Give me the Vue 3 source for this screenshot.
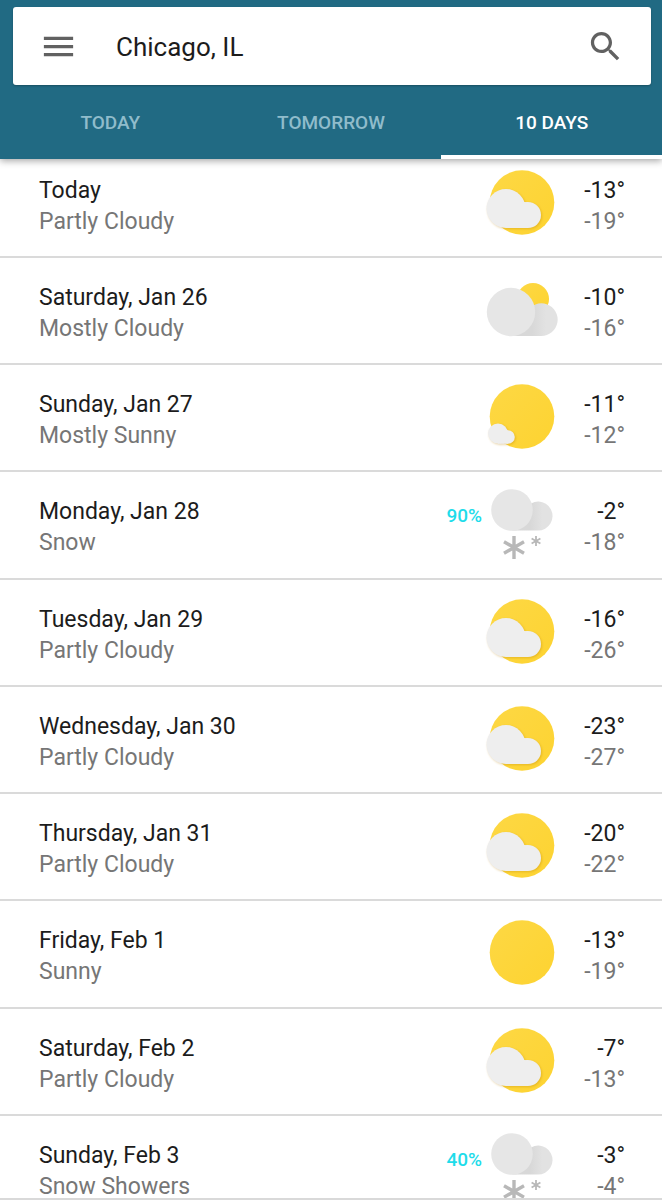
<script setup>
import { ref } from 'vue';

const city = ref('Chicago, IL');
const tabs = ['Today', 'Tomorrow', '10 Days'];
const activeTab = ref('10 Days');

const days = [
    { name: 'Today', text: 'Partly Cloudy', icon: 'partly', high: -13, low: -19 },
    { name: 'Saturday, Jan 26', text: 'Mostly Cloudy', icon: 'cloudy', high: -10, low: -16 },
    { name: 'Sunday, Jan 27', text: 'Mostly Sunny', icon: 'mostly-sunny', high: -11, low: -12 },
    { name: 'Monday, Jan 28', text: 'Snow', icon: 'snow', chance: 90, high: -2, low: -18 },
    { name: 'Tuesday, Jan 29', text: 'Partly Cloudy', icon: 'partly', high: -16, low: -26 },
    { name: 'Wednesday, Jan 30', text: 'Partly Cloudy', icon: 'partly', high: -23, low: -27 },
    { name: 'Thursday, Jan 31', text: 'Partly Cloudy', icon: 'partly', high: -20, low: -22 },
    { name: 'Friday, Feb 1', text: 'Sunny', icon: 'sunny', high: -13, low: -19 },
    { name: 'Saturday, Feb 2', text: 'Partly Cloudy', icon: 'partly', high: -7, low: -13 },
    { name: 'Sunday, Feb 3', text: 'Snow Showers', icon: 'snow', chance: 40, high: -3, low: -4 },
];
</script>

<template>
    <div class="app">
        <header class="header">
            <form class="search" @submit.prevent>
                <button type="button" class="icon-btn" aria-label="Menu">
                    <svg viewBox="0 0 24 24"><path d="M3 18h18v-2H3v2zm0-5h18v-2H3v2zm0-7v2h18V6H3z" /></svg>
                </button>
                <input v-model="city" class="search-input" type="text" aria-label="Location">
                <button type="submit" class="icon-btn" aria-label="Search">
                    <svg viewBox="0 0 24 24"><path d="M15.5 14h-.79l-.28-.27C15.41 12.59 16 11.11 16 9.5 16 5.91 13.09 3 9.5 3S3 5.91 3 9.5 5.91 16 9.5 16c1.61 0 3.09-.59 4.23-1.57l.27.28v.79l5 4.99L20.49 19l-4.99-5zm-6 0C7.01 14 5 11.99 5 9.5S7.01 5 9.5 5 14 7.01 14 9.5 11.99 14 9.5 14z" /></svg>
                </button>
            </form>
            <nav class="tabs">
                <button
                    v-for="tab in tabs"
                    :key="tab"
                    type="button"
                    class="tab"
                    :class="{ active: tab === activeTab }"
                    @click="activeTab = tab"
                >{{ tab }}</button>
            </nav>
        </header>

        <!-- gradients shared by the weather icons -->
        <svg class="defs" aria-hidden="true">
            <defs>
                <linearGradient id="sun" x1="0" y1="0" x2="1" y2="1">
                    <stop offset="0" stop-color="#fdd844" />
                    <stop offset="1" stop-color="#fdd331" />
                </linearGradient>
                <linearGradient id="back" x1="0" y1="0" x2="1" y2="0">
                    <stop offset="0.45" stop-color="#d8d8d8" />
                    <stop offset="0.75" stop-color="#e2e2e2" />
                </linearGradient>
            </defs>
        </svg>

        <ul class="days">
            <li v-for="day in days" :key="day.name" class="day">
                <div class="day-info">
                    <div class="day-name">{{ day.name }}</div>
                    <div class="day-text">{{ day.text }}</div>
                </div>
                <div v-if="day.chance" class="chance">{{ day.chance }}%</div>
                <svg class="weather" viewBox="0 0 80 80" aria-hidden="true">
                    <circle v-if="day.icon === 'cloudy'" cx="51" cy="29" r="16" fill="url(#sun)" />
                    <circle v-else-if="day.icon !== 'snow'" cx="40" cy="39.5" r="32.3" fill="url(#sun)" />

                    <g v-if="day.icon === 'partly'" class="cloud">
                        <circle cx="24" cy="45.5" r="19.5" />
                        <circle cx="46" cy="52" r="13" />
                        <path d="M24 46H46V65H24zM38 36Q41 40 46 39V50H38z" />
                    </g>
                    <g v-if="day.icon === 'mostly-sunny'" class="cloud">
                        <circle cx="16" cy="56.5" r="10" />
                        <circle cx="26" cy="60" r="6.8" />
                        <path d="M16 57H26V66.7H16zM22 52Q24 54 26 53.2V60H22z" />
                    </g>
                    <g v-if="day.icon === 'cloudy'">
                        <path d="M29 66H59A16.3 16.3 0 1 0 45 42z" fill="url(#back)" />
                        <circle cx="29" cy="42" r="24.2" fill="#e6e6e6" />
                    </g>
                    <g v-if="day.icon === 'snow'">
                        <path d="M30 46.6H56A14.5 14.5 0 1 0 44 24z" fill="url(#back)" />
                        <circle cx="30" cy="26" r="20.8" fill="#e6e6e6" />
                        <path class="flake" stroke-width="3.4" d="M32 52V75M22 57.8L42 69.2M42 57.8L22 69.2" />
                        <path class="flake" stroke-width="1.8" d="M54 52V62M49.6 54.5L58.4 59.5M58.4 54.5L49.6 59.5" />
                    </g>
                </svg>
                <div class="temps">
                    <div class="day-name">{{ day.high }}°</div>
                    <div class="day-text">{{ day.low }}°</div>
                </div>
            </li>
        </ul>
    </div>
</template>

<style>
body{
margin:0;
background:#fff;
}
</style>

<style scoped>
*{box-sizing:border-box}

.app{
display:flex;
flex-direction:column;
height:100vh;
border-bottom:2px solid #d9d9d9;
font-family:Roboto,sans-serif;
color:#1c1c1c;
}

.header{
position:relative;
z-index:1;
flex-shrink:0;
padding:7px 11px 0 13px;
background:#216a83;
box-shadow:0 2px 7px rgba(0,0,0,0.35);
}

.search{
display:flex;
align-items:center;
gap:38px;
height:78px;
padding:0 26px;
background:#fff;
border-radius:3px;
box-shadow:0 1px 2px rgba(0,0,0,0.25);
}

.icon-btn{
flex-shrink:0;
width:39px;
height:39px;
padding:0;
border:none;
background:none;
cursor:pointer;
}

.icon-btn svg{
display:block;
width:100%;
height:100%;
fill:#616161;
}

.search-input{
flex:1;
min-width:0;
padding:2px 0 0;
border:none;
outline:none;
background:none;
font:400 26px/32px Roboto,sans-serif;
color:#1c1c1c;
}

.tabs{
display:flex;
height:74px;
margin:0 -11px 0 -13px;
}

.tab{
flex:1;
padding:6px 0 0;
border:none;
border-bottom:4px solid transparent;
background:none;
font:500 19px/24px Roboto,sans-serif;
text-transform:uppercase;
color:#90bccb;
cursor:pointer;
}

.tab.active{
color:#fff;
border-bottom-color:#fff;
}

.defs{
position:absolute;
width:0;
height:0;
}

.days{
flex:1;
min-height:0;
display:grid;
grid-auto-rows:107px 107px 107px 108px;
margin:-8px 0 0;
padding:0;
list-style:none;
overflow-y:auto;
scrollbar-width:none;
}

.day{
display:flex;
align-items:flex-start;
padding:12px 37px 0 39px;
border-bottom:2px solid #dadada;
}

.day-info{
flex:1;
padding-top:12px;
}

.day-name,
.day-text{
font-size:23px;
line-height:31px;
}

.day-text{color:#767676}

.chance{
padding-top:17px;
font-size:19px;
font-weight:500;
line-height:30px;
color:#1fdcea;
}

.weather{
flex-shrink:0;
width:80px;
height:80px;
}

.cloud{
fill:#eee;
filter:drop-shadow(1px 1px 1px rgba(190,130,0,0.35));
}

.flake{
fill:none;
stroke:#b8b8b8;
}

.temps{
width:63px;
padding-top:12px;
text-align:right;
}
</style>
